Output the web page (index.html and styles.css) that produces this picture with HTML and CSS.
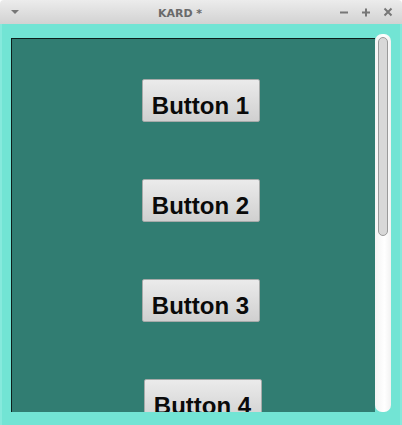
FILE: index.html
```html
<!DOCTYPE html>
<html>
<head>
<meta charset="utf-8">
<link rel="stylesheet" href="styles.css">
</head>
<body>
<div class="window">
  <div class="titlebar">
    <div class="tb-left">
      <svg width="10" height="6" viewBox="0 0 10 6"><path d="M1 1 L9 1 L5 5 Z" fill="#777"/></svg>
    </div>
    <div class="title">KARD *</div>
    <div class="tb-right">
      <svg width="10" height="10" viewBox="0 0 10 10"><path d="M1 5.5 H9" stroke="#777" stroke-width="2"/></svg>
      <svg width="10" height="10" viewBox="0 0 10 10"><path d="M1 5.5 H9 M5 1.5 V9.5" stroke="#777" stroke-width="2"/></svg>
      <svg width="10" height="10" viewBox="0 0 10 10"><path d="M1.5 1.5 L8.5 8.5 M8.5 1.5 L1.5 8.5" stroke="#777" stroke-width="2"/></svg>
    </div>
  </div>
  <div class="content">
    <div class="panel">
      <div class="btn">Button 1</div>
      <div class="btn">Button 2</div>
      <div class="btn">Button 3</div>
      <div class="btn shifted">Button 4</div>
    </div>
    <div class="track"><div class="thumb"></div></div>
  </div>
</div>
</body>
</html>
```

FILE: styles.css
```css
html, body {
  margin: 0;
  padding: 0;
  background: #ffffff;
}
.window {
  width: 402px;
  height: 425px;
  display: flex;
  flex-direction: column;
  border-radius: 4px 4px 0 0;
  overflow: hidden;
}
.titlebar {
  height: 24px;
  flex: none;
  display: flex;
  align-items: center;
  background: linear-gradient(#ececec, #d2d2d2);
  font-family: "DejaVu Sans", sans-serif;
}
.tb-left {
  width: 30px;
  flex: none;
  padding-left: 10px;
  box-sizing: border-box;
  display: flex;
  align-items: center;
}
.title {
  flex: 1;
  text-align: center;
  font-size: 11px;
  font-weight: bold;
  color: #6a6a6a;
  padding-top: 2px;
}
.tb-right {
  width: 72px;
  flex: none;
  display: flex;
  gap: 12px;
  padding-right: 9px;
  box-sizing: border-box;
  justify-content: flex-end;
  align-items: center;
}
.content {
  flex: 1;
  display: flex;
  background: #72e4d4;
  padding: 10px 11px 13px 11px;
  box-shadow: inset 2px 0 0 #86e9dc, inset -2px 0 0 #86e9dc;
  min-height: 0;
}
.panel {
  width: 364px;
  margin-top: 4px;
  box-sizing: border-box;
  background: #317d72;
  border-top: 1px solid #0d1f1c;
  border-left: 1px solid #0d1f1c;
  overflow: hidden;
  display: flex;
  flex-direction: column;
  align-items: center;
  padding-left: 14px;
  padding-top: 40px;
  gap: 57px;
}
.btn {
  flex: none;
  width: 118px;
  height: 43px;
  box-sizing: border-box;
  background: linear-gradient(#ebebeb, #d0d0d0);
  border: 1px solid #a6aaa9;
  border-radius: 2px;
  font-family: "Liberation Sans", Arial, sans-serif;
  font-weight: bold;
  font-size: 24px;
  color: #0a0a0a;
  display: flex;
  align-items: center;
  justify-content: center;
  padding-top: 10px;
}
.btn.shifted {
  margin-left: 4px;
}
.track {
  width: 16px;
  box-sizing: border-box;
  background: linear-gradient(90deg, #f4f4f4, #ffffff 60%, #f2f2f2);
  border-radius: 7px;
  padding: 3px 3px 0 3px;
}
.thumb {
  width: 10px;
  height: 199px;
  box-sizing: border-box;
  background: #d8d8d8;
  border: 1px solid #9a9a9a;
  border-radius: 5px;
}
```
